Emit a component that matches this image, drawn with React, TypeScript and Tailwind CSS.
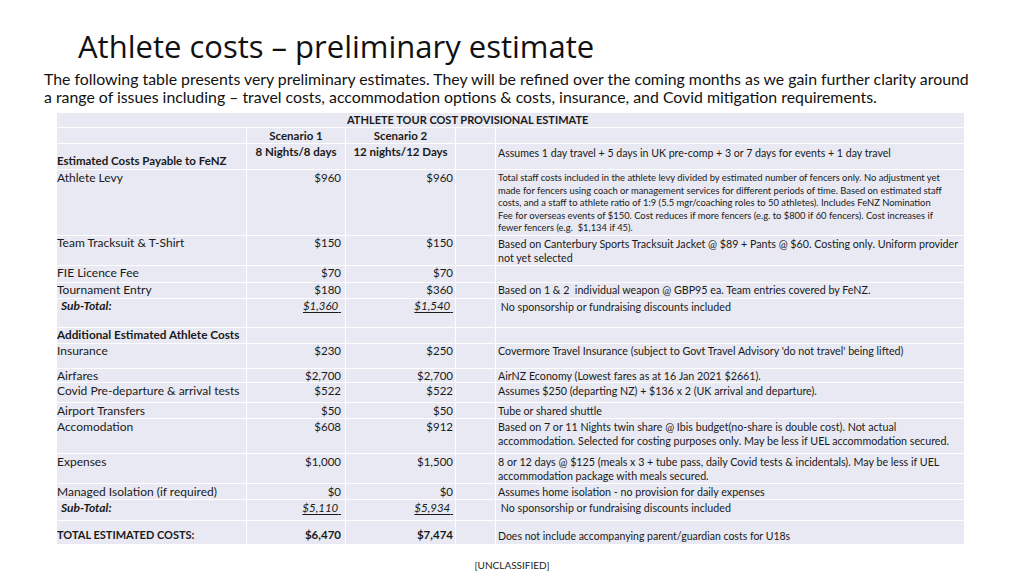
type Row = {
  label: string;
  s1?: string;
  s2?: string;
  note?: string;
  h: number;
  kind?: "normal" | "sub" | "section" | "total";
  small?: boolean;
};

const rows: Row[] = [
  {
    label: "Athlete Levy",
    s1: "$960",
    s2: "$960",
    note: "Total staff costs included in the athlete levy divided by estimated number of fencers only. No adjustment yet made for fencers using coach or management services for different periods of time. Based on estimated staff costs, and a staff to athlete ratio of 1:9 (5.5 mgr/coaching roles to 50 athletes). Includes FeNZ Nomination Fee for overseas events of $150. Cost reduces if more fencers (e.g. to $800 if 60 fencers). Cost increases if fewer fencers (e.g.  $1,134 if 45).",
    h: 65,
    small: true,
  },
  {
    label: "Team Tracksuit & T-Shirt",
    s1: "$150",
    s2: "$150",
    note: "Based on Canterbury Sports Tracksuit Jacket @ $89 + Pants @ $60. Costing only. Uniform provider not yet selected",
    h: 29,
  },
  { label: "FIE Licence Fee", s1: "$70", s2: "$70", h: 17 },
  {
    label: "Tournament Entry",
    s1: "$180",
    s2: "$360",
    note: "Based on 1 & 2  individual weapon @ GBP95 ea. Team entries covered by FeNZ.",
    h: 16,
  },
  {
    label: "Sub-Total:",
    s1: "$1,360",
    s2: "$1,540",
    note: " No sponsorship or fundraising discounts included",
    h: 29,
    kind: "sub",
  },
  { label: "Additional Estimated Athlete Costs", h: 16, kind: "section" },
  {
    label: "Insurance",
    s1: "$230",
    s2: "$250",
    note: "Covermore Travel Insurance (subject to Govt Travel Advisory 'do not travel' being lifted)",
    h: 25,
  },
  {
    label: "Airfares",
    s1: "$2,700",
    s2: "$2,700",
    note: "AirNZ Economy (Lowest fares as at 16 Jan 2021 $2661).",
    h: 14,
  },
  {
    label: "Covid Pre-departure & arrival tests",
    s1: "$522",
    s2: "$522",
    note: "Assumes $250 (departing NZ) + $136 x 2 (UK arrival and departure).",
    h: 20,
  },
  {
    label: "Airport Transfers",
    s1: "$50",
    s2: "$50",
    note: "Tube or shared shuttle",
    h: 16,
  },
  {
    label: "Accomodation",
    s1: "$608",
    s2: "$912",
    note: "Based on 7 or 11 Nights twin share @ Ibis budget(no-share is double cost). Not actual accommodation. Selected for costing purposes only. May be less if UEL accommodation secured.",
    h: 35,
  },
  {
    label: "Expenses",
    s1: "$1,000",
    s2: "$1,500",
    note: "8 or 12 days @ $125 (meals x 3 + tube pass, daily Covid tests & incidentals). May be less if UEL accommodation package with meals secured.",
    h: 30,
  },
  {
    label: "Managed Isolation (if required)",
    s1: "$0",
    s2: "$0",
    note: "Assumes home isolation - no provision for daily expenses",
    h: 16,
  },
  {
    label: "Sub-Total:",
    s1: "$5,110",
    s2: "$5,934",
    note: " No sponsorship or fundraising discounts included",
    h: 21,
    kind: "sub",
  },
  {
    label: "TOTAL ESTIMATED COSTS:",
    s1: "$6,470",
    s2: "$7,474",
    note: "Does not include accompanying parent/guardian costs for U18s",
    h: 24,
    kind: "total",
  },
];

const cell = "border-[1.5px] border-white p-0 align-top overflow-hidden";

function Amount({ value, kind }: { value?: string; kind?: Row["kind"] }) {
  if (!value) return null;
  if (kind === "sub") {
    return (
      <span className="italic underline underline-offset-[2px]">
        {value}&nbsp;
      </span>
    );
  }
  if (kind === "total") return <span className="font-bold">{value}</span>;
  return <span>{value}</span>;
}

function CostRow({ row }: { row: Row }) {
  const { kind } = row;
  const labelCls =
    kind === "sub"
      ? "pl-[4px] font-bold italic pt-[1.5px]"
      : kind === "section"
        ? "font-bold text-[11.75px] pt-[1.5px]"
        : kind === "total"
          ? "font-bold text-[11px] pt-[8px]"
          : "pt-[1.5px]";
  const amountPad = kind === "total" ? "pt-[8px]" : "pt-[1.5px]";
  const noteCls = row.small
    ? "text-[9.4px] leading-[12.6px] pt-[2px] pr-[19px]"
    : kind === "total"
      ? "text-[10.5px] leading-[12px] pt-[9px] pr-[4px]"
      : row.h < 26
        ? "text-[10.7px] leading-[12px] pt-[1.5px] pr-[4px]"
        : "text-[10.7px] leading-[14px] pt-[1px] pr-[4px]";
  return (
    <tr style={{ height: row.h }}>
      <td className={`${cell} whitespace-nowrap leading-[12px] ${labelCls}`}>
        {row.label}
      </td>
      <td
        className={`${cell} text-right pr-[4px] text-[11.5px] leading-[12px] ${amountPad}`}
      >
        <Amount value={row.s1} kind={kind} />
      </td>
      <td
        className={`${cell} text-right pr-[2px] text-[11.5px] leading-[12px] ${amountPad}`}
      >
        <Amount value={row.s2} kind={kind} />
      </td>
      <td className={cell}></td>
      <td className={`${cell} pl-[2px] whitespace-pre-wrap ${noteCls}`}>
        {row.note}
      </td>
    </tr>
  );
}

export default function App() {
  return (
    <div className="w-[1024px] h-[575px] bg-white text-black overflow-hidden font-['Lato','Liberation_Sans',sans-serif]">
      <h1 className="pl-[78px] pt-[27px] text-[31px] leading-[38px] font-['Open_Sans','Noto_Sans',sans-serif] text-[#111]">
        Athlete costs – preliminary estimate
      </h1>
      <div className="mt-[5px] pl-[44px] text-[15.85px] leading-[18px] text-[#111]">
        <div className="whitespace-nowrap">
          The following table presents very preliminary estimates. They will be
          refined over the coming months as we gain further clarity around
        </div>
        <div className="whitespace-nowrap">
          a range of issues including – travel costs, accommodation options &amp;
          costs, insurance, and Covid mitigation requirements.
        </div>
      </div>
      <table className="ml-[56px] mt-[6px] w-[909px] table-fixed border-collapse bg-[#e8e9f2] text-[12px] text-[#1a1a1a]">
        <colgroup>
          <col className="w-[190px]" />
          <col className="w-[99px]" />
          <col className="w-[110px]" />
          <col className="w-[40px]" />
          <col />
        </colgroup>
        <tbody>
          <tr className="h-[15px]">
            <td
              colSpan={5}
              className={`${cell} pl-[290px] text-[11px] font-bold leading-[13px]`}
            >
              ATHLETE TOUR COST PROVISIONAL ESTIMATE
            </td>
          </tr>
          <tr className="h-[16px]">
            <td className={cell}></td>
            <td
              className={`${cell} text-center text-[11.5px] font-bold leading-[13px] pt-[1px]`}
            >
              Scenario 1
            </td>
            <td
              className={`${cell} text-center text-[11.5px] font-bold leading-[13px] pt-[1px]`}
            >
              Scenario 2
            </td>
            <td className={cell}></td>
            <td className={cell}></td>
          </tr>
          <tr className="h-[26px]">
            <td
              className={`${cell} align-bottom! text-[11.5px] font-bold leading-[14px] pb-[1px]`}
            >
              Estimated Costs Payable to FeNZ
            </td>
            <td
              className={`${cell} text-center text-[11.5px] font-bold leading-[14px] pt-[1px]`}
            >
              8 Nights/8 days
            </td>
            <td
              className={`${cell} text-center text-[11.5px] font-bold leading-[14px] pt-[1px]`}
            >
              12 nights/12 Days
            </td>
            <td className={cell}></td>
            <td className={`${cell} pl-[2px] pt-[2px] text-[10.6px] leading-[14px]`}>
              Assumes 1 day travel + 5 days in UK pre-comp + 3 or 7 days for
              events + 1 day travel
            </td>
          </tr>
          {rows.map((row, i) => (
            <CostRow key={i} row={row} />
          ))}
        </tbody>
      </table>
      <div className="mt-[14px] text-center text-[10px] leading-[12px] text-[#222]">
        [UNCLASSIFIED]
      </div>
    </div>
  );
}
